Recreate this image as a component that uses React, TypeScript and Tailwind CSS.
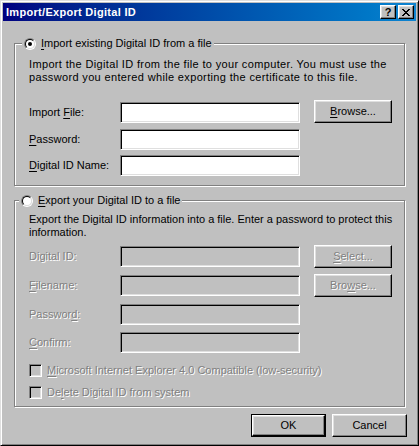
import React from "react";

const raised =
  "border border-t-white border-l-white border-r-black border-b-black shadow-[inset_-1px_-1px_0_#808080,inset_1px_1px_0_#dfdfdf]";
const sunken =
  "border border-t-[#808080] border-l-[#808080] border-b-white border-r-white shadow-[inset_1px_1px_0_#000,inset_-1px_-1px_0_#dfdfdf]";
const dis = "text-[#808080] [text-shadow:1px_1px_0_#fff]";

function U({ children }: { children: React.ReactNode }) {
  return <span className="underline underline-offset-[2px] decoration-1">{children}</span>;
}

function Radio({ checked }: { checked?: boolean }) {
  return (
    <div className="w-[12px] h-[12px] rounded-full border border-t-[#808080] border-l-[#808080] border-b-white border-r-white flex-none">
      <div className="w-full h-full rounded-full border border-t-black border-l-black border-b-[#dfdfdf] border-r-[#dfdfdf] bg-white flex items-center justify-center">
        {checked && <div className="w-[4px] h-[4px] rounded-full bg-black" />}
      </div>
    </div>
  );
}

function Checkbox() {
  return <div className={`w-[13px] h-[13px] flex-none bg-[#c0c0c0] ${sunken}`} />;
}

function Button({ children, disabled, className = "" }: { children: React.ReactNode; disabled?: boolean; className?: string }) {
  return (
    <div className={`w-[78px] h-[23px] flex items-center justify-center bg-[#c0c0c0] ${raised} ${disabled ? dis : "text-black"} ${className}`}>
      {children}
    </div>
  );
}

function Edit({ disabled }: { disabled?: boolean }) {
  return <div className={`w-[180px] h-[21px] ${disabled ? "bg-[#c0c0c0]" : "bg-white"} ${sunken}`} />;
}

export default function App() {
  return (
    <div className="w-[419px] h-[446px] bg-[#c0c0c0] border border-t-[#dfdfdf] border-l-[#dfdfdf] border-r-black border-b-black shadow-[inset_1px_1px_0_#fff,inset_-1px_-1px_0_#808080] p-[2px] flex flex-col font-['Liberation_Sans',Arial,sans-serif] text-[11px] leading-[13px] text-black select-none">
      {/* Title bar */}
      <div className="h-[18px] flex items-center bg-gradient-to-r from-[#000080] to-[#1084d0] pl-[3px] pr-[2px]">
        <span className="text-white font-bold text-[11px] tracking-[0.3px] flex-1">Import/Export Digital ID</span>
        <div className={`w-[16px] h-[14px] bg-[#c0c0c0] ${raised} flex items-center justify-center font-bold text-[11px] leading-none text-black`}>?</div>
        <div className={`ml-[2px] w-[16px] h-[14px] bg-[#c0c0c0] ${raised} flex items-center justify-center`}>
          <svg width="8" height="7" viewBox="0 0 8 7" shapeRendering="crispEdges">
            <path d="M0 0h2v1H0zM6 0h2v1H6zM1 1h2v1H1zM5 1h2v1H5zM2 2h4v1H2zM3 3h2v1H3zM2 4h4v1H2zM1 5h2v1H1zM5 5h2v1H5zM0 6h2v1H0zM6 6h2v1H6z" fill="#000" />
          </svg>
        </div>
      </div>

      {/* Group 1 */}
      <div className="mt-[22px] ml-[11px] w-[391px] h-[143px] flex-none border border-[#808080] shadow-[1px_1px_0_#fff,inset_1px_1px_0_#fff] flex flex-col">
        <div className="-mt-[7px] ml-[7px] self-start h-[13px] flex items-center gap-[5px] bg-[#c0c0c0] px-[2px]">
          <Radio checked />
          <span><U>I</U>mport existing Digital ID from a file</span>
        </div>
        <div className="pl-[14px] flex flex-col">
          <p className="mt-[8px] tracking-[0.35px] whitespace-nowrap">
            Import the Digital ID from the file to your computer. You must use the
            <br />
            password you entered while exporting the certificate to this file.
          </p>
          <div className="mt-[16px] h-[23px] flex items-start">
            <div className="w-[91px] h-[21px] mt-[2px] flex items-center"><span>Import <U>F</U>ile:</span></div>
            <div className="mt-[2px]"><Edit /></div>
            <Button className="ml-[14px]"><span><U>B</U>rowse...</span></Button>
          </div>
          <div className="mt-[6px] h-[21px] flex items-center">
            <div className="w-[91px]"><span><U>P</U>assword:</span></div>
            <Edit />
          </div>
          <div className="mt-[5px] h-[21px] flex items-center">
            <div className="w-[91px]"><span><U>D</U>igital ID Name:</span></div>
            <Edit />
          </div>
        </div>
      </div>

      {/* Group 2 */}
      <div className="mt-[14px] ml-[11px] w-[391px] h-[207px] flex-none border border-[#808080] shadow-[1px_1px_0_#fff,inset_1px_1px_0_#fff] flex flex-col">
        <div className="-mt-[7px] ml-[4px] self-start h-[13px] flex items-center gap-[5px] bg-[#c0c0c0] px-[2px]">
          <Radio />
          <span><U>E</U>xport your Digital ID to a file</span>
        </div>
        <div className="pl-[14px] flex flex-col">
          <p className="mt-[6px] tracking-[0px] whitespace-nowrap">
            Export the Digital ID information into a file. Enter a password to protect this
            <br />
            information.
          </p>
          <div className="mt-[6px] h-[23px] flex items-start">
            <div className={`w-[91px] h-[21px] mt-[1px] flex items-center ${dis}`}><span>Digital ID:</span></div>
            <div className="mt-[1px]"><Edit disabled /></div>
            <Button disabled className="ml-[14px]"><span><U>S</U>elect...</span></Button>
          </div>
          <div className="mt-[6px] h-[23px] flex items-start">
            <div className={`w-[91px] h-[21px] mt-[1px] flex items-center ${dis}`}><span><U>F</U>ilename:</span></div>
            <div className="mt-[1px]"><Edit disabled /></div>
            <Button disabled className="ml-[14px]"><span>Bro<U>w</U>se...</span></Button>
          </div>
          <div className="mt-[7px] h-[21px] flex items-center">
            <div className={`w-[91px] ${dis}`}><span>Passwor<U>d</U>:</span></div>
            <Edit disabled />
          </div>
          <div className="mt-[7px] h-[21px] flex items-center">
            <div className={`w-[91px] ${dis}`}><span><U>C</U>onfirm:</span></div>
            <Edit disabled />
          </div>
          <div className="mt-[11px] h-[13px] flex items-center gap-[5px]">
            <Checkbox />
            <span className={dis}><U>M</U>icrosoft Internet Explorer 4.0 Compatible (low-security)</span>
          </div>
          <div className="mt-[9px] h-[13px] flex items-center gap-[5px]">
            <Checkbox />
            <span className={dis}>De<U>l</U>ete Digital ID from system</span>
          </div>
        </div>
      </div>

      {/* Buttons */}
      <div className="mt-[7px] flex justify-end gap-[6px] pr-[9px]">
        <div className="w-[75px] h-[23px] border border-black">
          <div className={`w-full h-full flex items-center justify-center bg-[#c0c0c0] ${raised}`}>OK</div>
        </div>
        <div className={`w-[75px] h-[23px] flex items-center justify-center bg-[#c0c0c0] ${raised}`}>Cancel</div>
      </div>
    </div>
  );
}
